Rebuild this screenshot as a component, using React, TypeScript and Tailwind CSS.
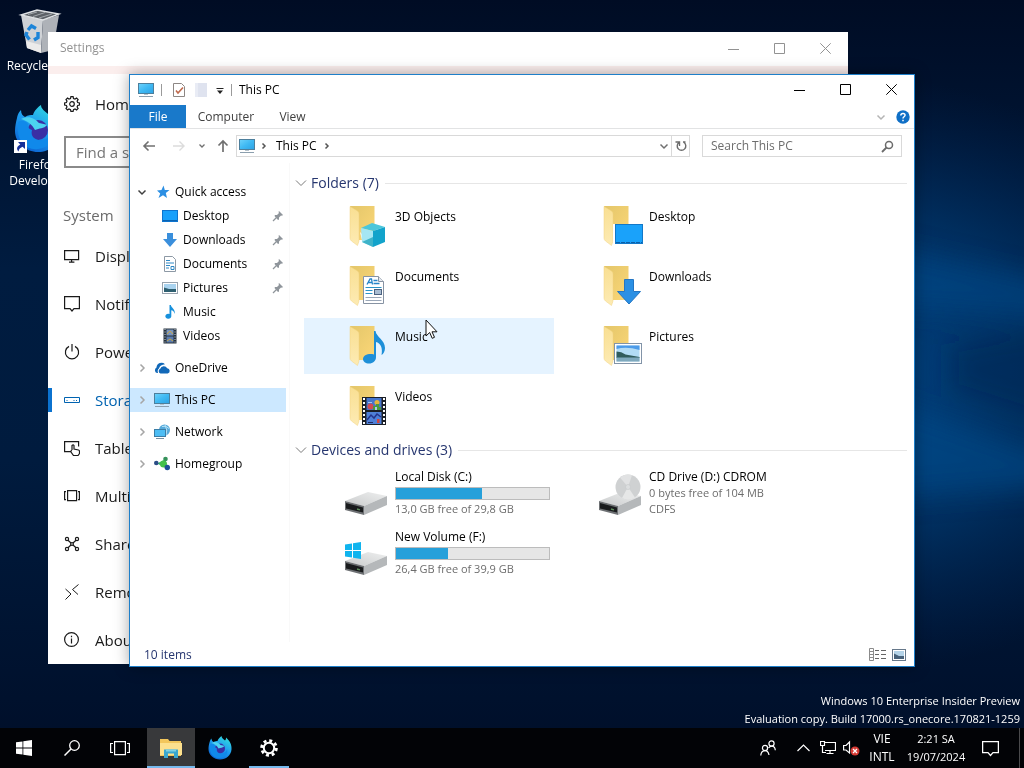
import React from "react";

type IconProps = { className?: string };

/* ---------- Wallpaper ---------- */

function Wallpaper() {
  return (
    <svg className="absolute inset-0 h-full w-full" viewBox="0 0 1024 768" preserveAspectRatio="none" aria-hidden="true">
      <defs>
        <linearGradient id="wpBase" x1="0" y1="0" x2="0" y2="1">
          <stop offset="0" stopColor="#000c24" />
          <stop offset="0.35" stopColor="#001c40" />
          <stop offset="0.6" stopColor="#001b3e" />
          <stop offset="1" stopColor="#000e28" />
        </linearGradient>
        <radialGradient id="wpGlow">
          <stop offset="0" stopColor="#004d92" />
          <stop offset="0.55" stopColor="#003a72" stopOpacity="0.75" />
          <stop offset="1" stopColor="#00285a" stopOpacity="0" />
        </radialGradient>
        <filter id="wpBlur" x="-20%" y="-50%" width="140%" height="200%">
          <feGaussianBlur stdDeviation="13" />
        </filter>
      </defs>
      <rect width="1024" height="768" fill="url(#wpBase)" />
      <ellipse cx="850" cy="375" rx="370" ry="300" fill="url(#wpGlow)" opacity="0.85" />
      <g filter="url(#wpBlur)">
        <polygon points="860,240 1060,285 1060,318 860,305" fill="#004f92" opacity="0.45" />
        <polygon points="860,390 1060,460 1060,485 860,500" fill="#004f92" opacity="0.5" />
        <polygon points="950,345 1060,325 1060,425 950,390" fill="#002650" opacity="0.45" />
      </g>
    </svg>
  );
}

/* ---------- Desktop icons ---------- */

function RecycleBin() {
  return (
    <svg width="48" height="48" viewBox="0 0 48 48" aria-hidden="true">
      <polygon points="7,9 29,14 27,47 13,42" fill="#cfd2d6" />
      <polygon points="29,14 45,9 39,44 27,47" fill="#aeb2b8" />
      <polygon points="7,9 23,4 45,8 29,14" fill="#5b6066" stroke="#dfe2e5" strokeWidth="1.4" />
      <path d="M14 8.500 23 6M19 10.500 31 6.500M25 12 38 8" stroke="#a4a9ae" />
      <polygon points="12,35 27,39 27,47 13,42" fill="#ecebea" />
      <g fill="none" stroke="#1c84d8" strokeWidth="3.4">
        <path d="M14 24 17.500 20 22 22.500" />
        <path d="M24 26 24 31.500 20 34" />
        <path d="M15.500 33.500 12 29 13 26" />
      </g>
    </svg>
  );
}

function FirefoxDev({ className }: IconProps) {
  return (
    <svg className={className} viewBox="0 0 48 48" aria-hidden="true">
      <defs>
        <linearGradient id="fxBody" x1="0.8" y1="0" x2="0.2" y2="1">
          <stop offset="0" stopColor="#35e0dc" />
          <stop offset="0.45" stopColor="#1f9ff0" />
          <stop offset="1" stopColor="#0a5ed0" />
        </linearGradient>
      </defs>
      <path d="M3 13C4 8 6 6 7 5c0 4 2 6 4 7 3-2 6-2 8-2 1-4 5-8 8-10 0 4 4 6 7 9 2-2 2-4 2-6 7 6 12 14 11 24-1 12-11 20-23 20S1 38 1 26c0-5 1-9 2-13Z" fill="url(#fxBody)" />
      <circle cx="24" cy="25" r="10" fill="#3a2fa5" />
      <path d="M4 17c3-2 7-2 10 2-1 3 1 5 4 6-2 7 4 11 11 10 5-1 8-4 9-9 3 9-3 17-14 18C13 46 4 36 4 26Z" fill="#1089ea" />
      <path d="M7 14c7-4 14-1 18 4 3 1 7 1 8 2-3 4-8 3-12 5-3-6-8-9-14-11Z" fill="#4cd3f0" />
    </svg>
  );
}

function DesktopIcons() {
  return (
    <div className="absolute left-0 top-1.5 flex w-[76px] flex-col items-center gap-[31px] text-center text-xs leading-4 text-white">
      <button type="button" className="flex flex-col items-center gap-1">
        <RecycleBin />
        <span className="whitespace-nowrap">Recycle Bin</span>
      </button>
      <button type="button" className="flex flex-col items-center gap-1">
        <span className="relative block">
          <FirefoxDev className="h-12 w-12" />
          <svg className="absolute bottom-0 left-0" width="13" height="13" viewBox="0 0 13 13" aria-hidden="true">
            <rect width="13" height="13" fill="#fff" />
            <path d="M4 2h7v7L8.500 6.800C6 8 5 9 4.500 11.500 2 9 3 6 6.300 4.500Z" fill="#16309a" />
          </svg>
        </span>
        <span>Firefox Developer</span>
      </button>
    </div>
  );
}

/* ---------- Settings window ---------- */

const line = { fill: "none", stroke: "currentColor", strokeWidth: 1.2 } as const;

function Svg16({ children, className }: { children: React.ReactNode; className?: string }) {
  return (
    <svg width="16" height="16" viewBox="0 0 16 16" className={className ?? "shrink-0"} aria-hidden="true">
      {children}
    </svg>
  );
}

const gearPath =
  "M6.900.6h2.200l.4 1.900 1.500.6L12.600 2l1.500 1.500-1 1.600.6 1.400 1.800.4v2.200l-1.800.4-.6 1.500 1 1.500-1.500 1.500-1.600-1-1.500.6-.4 1.800H6.900l-.4-1.800-1.500-.6-1.500 1L2 12.500l1-1.500-.6-1.500L.6 9.100V6.900l1.800-.4L3 5.100 2 3.500 3.500 2 5 3.100l1.500-.6Z";

const settingsIcons: Record<string, React.ReactNode> = {
  display: (
    <g {...line}>
      <path d="M.6 2.600h14v9H.600ZM7.600 11.600v2.400M5 14.200h5.400" />
    </g>
  ),
  notify: (
    <g {...line}>
      <path d="M.6.600h14.800v12H10L8 15l-2-2.400H.600Z" />
    </g>
  ),
  power: (
    <g {...line}>
      <path d="M5 2.400a6.600 6.600 0 1 0 6 0M8 0v7.500" />
    </g>
  ),
  storage: (
    <g fill="none" stroke="currentColor">
      <path d="M.5 5.500h15v5H.5Z" />
      <path d="M2.500 8.500h1M9.500 8.500h1M12 8.500h1" />
    </g>
  ),
  tablet: (
    <g {...line}>
      <path d="M6.500 11.600H.6v-10h14v5M8 10V5.500q1.200-1.200 2 0V9l4.500 1q1 .3 1 1.500v2l-1.500 2H9.500L7 12q-.3-1.500 1-2" />
    </g>
  ),
  multi: (
    <g {...line}>
      <path d="M3.600 2.600h9v10h-9ZM2 3.600H.6v8H2M14 3.600h1.400v8H14" />
    </g>
  ),
  shared: (
    <g {...line}>
      <circle cx="3" cy="3" r="1.600" />
      <circle cx="13" cy="3" r="1.600" />
      <circle cx="3" cy="13" r="1.600" />
      <circle cx="13" cy="13" r="1.600" />
      <circle cx="8" cy="8" r="1.400" />
      <path d="M4 4.200 7 7M12 4.200 9 7M4 11.800 7 9M12 11.800 9 9" />
    </g>
  ),
  remote: (
    <g fill="none" stroke="currentColor">
      <path d="M1.500 5 7 10 1.500 15.500M14.500.5 8.500 5.500l5.500 5" />
    </g>
  ),
  about: (
    <g {...line}>
      <circle cx="7.500" cy="7.500" r="6.900" />
      <path d="M7.500 6.500v5M7.500 3.800v1.400" />
    </g>
  ),
};

const settingsItems = [
  { icon: "display", label: "Display" },
  { icon: "notify", label: "Notifications" },
  { icon: "power", label: "Power & sleep" },
  { icon: "storage", label: "Storage", active: true },
  { icon: "tablet", label: "Tablet mode" },
  { icon: "multi", label: "Multitasking" },
  { icon: "shared", label: "Shared" },
  { icon: "remote", label: "Remote" },
  { icon: "about", label: "About" },
];

function CaptionButtons() {
  return (
    <div className="flex h-full pb-0.5">
      <button type="button" aria-label="Minimize" className="flex w-[46px] items-center justify-center">
        <svg width="11" height="11" viewBox="0 0 11 11"><path d="M0 6.500h11" stroke="currentColor" /></svg>
      </button>
      <button type="button" aria-label="Maximize" className="flex w-[46px] items-center justify-center">
        <svg width="11" height="11" viewBox="0 0 11 11"><path d="M.5.500h10v10H.500Z" fill="none" stroke="currentColor" /></svg>
      </button>
      <button type="button" aria-label="Close" className="flex w-[46px] items-center justify-center">
        <svg width="11" height="11" viewBox="0 0 11 11"><path d="M.3.300l10.400 10.400M10.700.3.300 10.700" stroke="currentColor" /></svg>
      </button>
    </div>
  );
}

function SettingsWindow() {
  return (
    <section className="absolute bottom-16 left-12 right-44 top-8 flex flex-col overflow-hidden bg-white text-[15px] leading-5 text-[#1a1a1a]">
      <header className="flex h-[34px] shrink-0 items-center justify-between pl-3 text-xs text-[#929292]">
        <span className="pb-0.5">Settings</span>
        <CaptionButtons />
      </header>
      <div className="h-2 shrink-0 bg-[#fbeeed]" />
      <nav className="flex w-80 flex-col pt-1.5">
        <a href="#home" className="flex h-12 items-center gap-[15px] pl-4">
          <Svg16>
            <path d={gearPath} {...line} />
            <circle cx="8" cy="8" r="2.300" {...line} />
          </Svg16>
          Home
        </a>
        <label className="mx-4 mt-2 flex h-8 items-center border-2 border-[#8a8a8a] px-2.5">
          <input type="text" aria-label="Find a setting" placeholder="Find a setting" className="w-full bg-transparent outline-none placeholder:text-[#767676]" />
        </label>
        <h2 className="mt-[37px] h-5 pl-[15px] text-[#6b6b6b]">System</h2>
        <ul className="mt-[7px]">
          {settingsItems.map((it) => (
            <li key={it.label}>
              <a href={`#${it.icon}`} className={it.active ? "flex h-12 items-center text-[#0063b1]" : "flex h-12 items-center"}>
                <span className={it.active ? "h-6 w-1 bg-[#0b72cf]" : "h-6 w-1"} />
                <span className="ml-3 mr-[15px]">
                  <Svg16>{settingsIcons[it.icon]}</Svg16>
                </span>
                {it.label}
              </a>
            </li>
          ))}
        </ul>
      </nav>
    </section>
  );
}

/* ---------- Explorer small icons ---------- */

function PcIcon() {
  return (
    <svg width="18" height="16" viewBox="0 0 18 16" aria-hidden="true" className="shrink-0">
      <defs>
        <linearGradient id="pcScreen" x1="0" y1="0" x2="1" y2="1">
          <stop offset="0" stopColor="#6fd3fb" />
          <stop offset="0.5" stopColor="#3fb9f3" />
          <stop offset="1" stopColor="#2da2e4" />
        </linearGradient>
      </defs>
      <rect x="1.500" y="1.500" width="15" height="10" fill="url(#pcScreen)" stroke="#4d7f9c" />
      <path d="M2 14.500h14" stroke="#8c9fae" />
      <path d="M7 12.500h4" stroke="#b6c3cc" />
    </svg>
  );
}

function Chevron({ dir, className, small }: { dir: "right" | "down"; className?: string; small?: boolean }) {
  const d = small
    ? "M3.500 2.500 6 5 3.500 7.500"
    : dir === "right"
      ? "M3.500 1.500 7 5 3.500 8.500"
      : "M1.500 3.500 5 7 8.500 3.500";
  return (
    <svg width="10" height="10" viewBox="0 0 10 10" className={className} aria-hidden="true">
      <path d={d} fill="none" stroke="currentColor" strokeWidth="1.500" />
    </svg>
  );
}

function Pin() {
  return (
    <svg width="12" height="12" viewBox="0 0 12 12" aria-hidden="true">
      <path d="M7 1 11 5 10 5.800 9 5.500 7 7.500 7 9.500 6 10 2.500 6 3 5 5 5 7 3 6.500 2Z" fill="#8f959b" />
      <path d="M4.500 7.500 1 11" stroke="#8f959b" strokeWidth="1.200" />
    </svg>
  );
}

const navIcons: Record<string, React.ReactNode> = {
  star: <path d="M9.500 1.500 10.800 6h4.700l-3.700 3 1.200 5L9 11.200 4.500 14l1.700-4.500L3 6.500l4.500-.5Z" fill="#2c8fe3" />,
  desktop: (
    <>
      <rect x=".5" y="2.500" width="15" height="11" fill="#18a0fb" stroke="#0d74cf" />
      <path d="M1 12.500h14" stroke="#0b62b0" />
    </>
  ),
  downloads: <path d="M5 1h6v6h4L8 15 1 7h4Z" fill="#3a8fdc" />,
  documents: (
    <>
      <path d="M2.500.500h8l3 3v12h-11Z" fill="#fff" stroke="#8d99a5" />
      <path d="M4 4.500h4M4 7h8M4 9.500h4M4 12h3M9 10.500h3v3H9Z" stroke="#2f88c5" fill="none" />
    </>
  ),
  pictures: (
    <>
      <rect x=".5" y="2.500" width="15" height="11" fill="#fff" stroke="#98a3ae" />
      <rect x="2" y="4" width="12" height="8" fill="#a9d3ef" />
      <path d="M2 7.500 7 9h7v3H2Z" fill="#2e5f70" />
    </>
  ),
  music: <path d="M7.500 1h1.300c.5 3 4.700 4 4 9-.6-2.300-2-3.500-3.500-3.700V12A3 2.500 0 1 1 7.500 10Z" fill="#1690dc" />,
  videos: (
    <>
      <rect x="1.500" y=".5" width="13" height="15" fill="#26323e" />
      <rect x="4.500" y="1.500" width="7" height="6" fill="#7b95bd" />
      <rect x="4.500" y="8.500" width="7" height="6" fill="#5c7cae" />
      <path d="M5 6 8 3l3 3M5 13l3-2 3 2" stroke="#c8a748" fill="none" />
      <path d="M3 1v14M13 1v14" stroke="#d0d6dc" strokeDasharray="1 1.500" />
    </>
  ),
  onedrive: (
    <>
      <path d="M3 13A3 3 0 0 1 2.500 7.500 5 5 0 0 1 11 4.200Q6 4.500 5 8.500 3 10 4 13Z" fill="#1168b8" />
      <path d="M6.500 13.500a2.500 2.500 0 0 1-.3-4.700 3.900 3.900 0 0 1 7-.6 2.700 2.700 0 0 1 .5 5.300Z" fill="#1168b8" />
    </>
  ),
  network: (
    <>
      <circle cx="10.500" cy="6" r="5.500" fill="#56aadb" />
      <path d="M8 2.500q4-1.500 7 2M11 1q3 5 1 10" stroke="#b7e3f7" fill="none" />
      <rect x=".5" y="5.500" width="11" height="7" fill="#4dbdf4" stroke="#3b7da6" />
      <path d="M2 14.500h8" stroke="#7890a2" />
    </>
  ),
  homegroup: (
    <>
      <path d="M3 7.500 12 3v9Z" fill="#36b36a" />
      <circle cx="2.300" cy="7" r="2.300" fill="#2b4d86" />
      <circle cx="11.500" cy="3" r="2.300" fill="#35915a" />
      <circle cx="9.500" cy="8" r="3.500" fill="#43c04a" />
      <circle cx="13.300" cy="11.500" r="2.700" fill="#1d4f96" />
    </>
  ),
};

function NavRow({ icon, label, pinned, root, open, selected }: { icon: string; label: string; pinned?: boolean; root?: boolean; open?: boolean; selected?: boolean }) {
  const pad = root ? "pl-[7px] gap-[7px]" : "pl-8 gap-1.5";
  return (
    <a href={`#${icon}`} className={`flex h-6 items-center ${pad} ${selected ? "bg-[#cce8ff]" : ""}`}>
      {root && <Chevron dir={open ? "down" : "right"} className={open ? "text-[#404040]" : "text-[#a6a6a6]"} />}
      <span className="flex items-center gap-[5px]">
        {icon === "pc" ? (
          <span className="-ml-px -mr-px flex"><PcIcon /></span>
        ) : (
          <Svg16>{navIcons[icon]}</Svg16>
        )}
        {label}
      </span>
      {pinned && <span className="ml-auto mr-0.5"><Pin /></span>}
    </a>
  );
}

function NavPane() {
  return (
    <nav className="flex w-40 shrink-0 flex-col gap-2 border-r border-[#f9f9f9] pr-[3px] pt-[17px]">
      <div>
        <NavRow root open icon="star" label="Quick access" />
        <NavRow icon="desktop" label="Desktop" pinned />
        <NavRow icon="downloads" label="Downloads" pinned />
        <NavRow icon="documents" label="Documents" pinned />
        <NavRow icon="pictures" label="Pictures" pinned />
        <NavRow icon="music" label="Music" />
        <NavRow icon="videos" label="Videos" />
      </div>
      <NavRow root icon="onedrive" label="OneDrive" />
      <NavRow root selected icon="pc" label="This PC" />
      <NavRow root icon="network" label="Network" />
      <NavRow root icon="homegroup" label="Homegroup" />
    </nav>
  );
}

/* ---------- Large tile icons ---------- */

function Folder({ children }: { children: React.ReactNode }) {
  return (
    <svg width="48" height="48" viewBox="0 0 48 48" className="shrink-0" aria-hidden="true">
      <defs>
        <linearGradient id="folderBack" x1="0" y1="0" x2="1" y2="1">
          <stop offset="0" stopColor="#e3c66a" />
          <stop offset="1" stopColor="#fcd777" />
        </linearGradient>
        <linearGradient id="folderFront" x1="0" y1="0" x2="0" y2="1">
          <stop offset="0" stopColor="#f9df92" />
          <stop offset="1" stopColor="#fdebb4" />
        </linearGradient>
      </defs>
      <path d="M6 4h24.500v34H12Z" fill="url(#folderBack)" />
      <path d="M6 4.500 13.500 9q1.500 1 1.500 3v27l-1.500 4.500L7.500 39Q6 38 6 36Z" fill="url(#folderFront)" stroke="#f1d283" strokeWidth="0.5" />
      {children}
    </svg>
  );
}

const overlays: Record<string, React.ReactNode> = {
  objects: (
    <>
      <path d="M16 30 24 38 30 45 19 42Z" fill="#fff" />
      <polygon points="17,26 28,21 41,25 29,29" fill="#4bc6da" />
      <polygon points="17,26 29,29 29,45 18,40" fill="#a5e6f3" />
      <polygon points="29,29 41,25 41,40 29,45" fill="#12a3cb" />
      <polygon points="18,40 29,35 29,45" fill="#3eb3c9" />
    </>
  ),
  desktop: (
    <>
      <path d="M15 22v19h3V22Z" fill="#fff" />
      <rect x="17.500" y="22.500" width="27" height="19" fill="#1aa2fa" stroke="#1378c8" />
      <path d="M18 40.500h26" stroke="#0c5fa8" strokeDasharray="4 1" />
    </>
  ),
  documents: (
    <>
      <path d="M19.500 14.500h15l5 5v22h-20Z" fill="#fff" stroke="#8793a3" />
      <path d="M34.500 14.500v5h5" fill="#e5e9ee" stroke="#8793a3" />
      <path d="M23 22.500 26 17h1.500l1 5.500M24 20.500h4M29.500 18.500h4M29.500 21.500h6" stroke="#2684c8" fill="none" strokeWidth="1.300" />
      <path d="M21.500 25.500h16M21.500 28.500h7M21.500 31.500h7" stroke="#2b94c9" />
      <path d="M21.500 35.500h16M21.500 38.500h16" stroke="#9aa7b8" />
      <rect x="30.500" y="27.500" width="7" height="5" fill="#a9bdd2" stroke="#4c6280" />
    </>
  ),
  downloads: (
    <path d="M26.500 17.500h9v12h7L31 42 19.500 29.500h7Z" fill="#2b90e4" stroke="#2476c4" />
  ),
  music: (
    <path d="M30 9h1.500c.8 6 9.500 9 9.500 17 0 3-1.500 6-3.500 7 1.500-7-1-12-5.500-13v15c0 4-3 6.500-7 6.500-3.500 0-6-1.800-6-4.500 0-4 6-6 11-4.500Z" fill="#1e8fd8" />
  ),
  pictures: (
    <>
      <rect x="16.500" y="21.500" width="27" height="20" fill="#fff" stroke="#8294a8" />
      <rect x="18.500" y="23.500" width="23" height="16" fill="#b3dcf5" />
      <path d="M18.500 27q10-3 23 1v-4.500h-23Z" fill="#4c9be9" />
      <path d="M18.500 29.500q5 0 9 3l14 2.500v1h-23Z" fill="#315c5c" />
      <path d="M18.500 35.500h23v4h-23Z" fill="#7fa9bd" />
    </>
  ),
  videos: (
    <>
      <rect x="18" y="15" width="24" height="28" fill="#1b1f26" />
      <path d="M20 16v26M40 16v26" stroke="#fff" strokeWidth="2" strokeDasharray="2 2" />
      <rect x="22.500" y="16" width="15" height="12" fill="#4675cc" />
      <rect x="22.500" y="30" width="15" height="12" fill="#4f80d8" />
      <circle cx="26.500" cy="24.500" r="3" fill="#cf4a55" />
      <circle cx="33" cy="20.500" r="2.500" fill="#e6b43a" />
      <path d="M29 24h3v-2h3v3h2v3h-8Z" fill="#4b9a3c" />
      <path d="M24 20h4v1h-4ZM31 25h2v3h-2Z" fill="#a6c6ef" />
      <path d="M23 38 27 33l3 3 3-4 4 3" stroke="#24348c" strokeWidth="1.500" fill="none" />
      <path d="M33 37h2.500v4H33Z" fill="#d0453f" />
      <path d="M24 40h5v1h-5Z" fill="#1f2c66" />
    </>
  ),
};

function DriveIcon({ kind }: { kind: "disk" | "cd" | "windows" }) {
  return (
    <svg width="48" height="48" viewBox="0 0 48 48" className="shrink-0" aria-hidden="true">
      <defs>
        <linearGradient id="driveTop" x1="0" y1="1" x2="1" y2="0">
          <stop offset="0" stopColor="#c9cbcc" />
          <stop offset="1" stopColor="#eeefef" />
        </linearGradient>
      </defs>
      <polygon points="1,32 24,23 43,27 20,37" fill="url(#driveTop)" />
      <polygon points="20,37 43,27 43,36 20,46" fill="#b5b8ba" />
      <polygon points="1,32 20,37 20,46 1,41" fill="#6d7073" />
      <polygon points="2,34 19,38.500 19,43.500 2,39.500" fill="#191b1d" />
      <path d="M13 40 16 40.800" stroke="#5f8f5e" strokeWidth="1.300" />
      {kind === "cd" && (
        <>
          <circle cx="30" cy="18" r="12.500" fill="#cfd1d2" />
          <path d="M30 18 22 8.500A12.500 12.500 0 0 1 34 6.200Z" fill="#e1e2e3" />
          <path d="M30 18 37 28.400A12.500 12.500 0 0 1 24 29Z" fill="#e6e7e7" />
          <circle cx="30" cy="18" r="2.500" fill="#dcdedf" stroke="#c4c7c9" strokeWidth="0.600" />
        </>
      )}
      {kind === "windows" && (
        <g fill="#10b4ee">
          <polygon points="1,15.500 8,14.500 8,21 1,21" />
          <polygon points="9,14.300 17,13 17,21 9,21" />
          <polygon points="1,22 8,22 8,28.500 1,27.500" />
          <polygon points="9,22 17,22 17,30 9,28.700" />
        </g>
      )}
    </svg>
  );
}

function Tile({ icon, children, hovered }: { icon: React.ReactNode; children: React.ReactNode; hovered?: boolean }) {
  return (
    <button type="button" className={`flex h-14 w-[250px] items-center gap-[3px] pl-10 text-left leading-4 ${hovered ? "bg-[#e5f3ff]" : ""}`}>
      {icon}
      <span className="block min-w-0">{children}</span>
    </button>
  );
}

function GroupHeader({ title }: { title: string }) {
  return (
    <div className="flex h-[30px] items-center gap-1 pl-[5px] pr-[7px]">
      <svg width="12" height="12" viewBox="0 0 12 12" aria-hidden="true">
        <path d="M1 3.500 6 8.500 11 3.500" fill="none" stroke="#7a7a7a" />
      </svg>
      <h2 className="mr-0.5 text-sm leading-5 text-[#26366f]">{title}</h2>
      <span className="h-px flex-1 bg-[#e6e6e6]" />
    </div>
  );
}

function FolderTile({ kind, label, hovered }: { kind: string; label: string; hovered?: boolean }) {
  return (
    <Tile icon={<Folder>{overlays[kind]}</Folder>} hovered={hovered}>
      <span className="block h-[34px]">{label}</span>
    </Tile>
  );
}

function VolumeTile({ kind, label, percent, detail }: { kind: "disk" | "windows"; label: string; percent: number; detail: string }) {
  return (
    <Tile icon={<DriveIcon kind={kind} />}>
      <span className="block h-4">{label}</span>
      <span className="flex h-4 items-center">
        <span className="flex h-[13px] w-[155px] border border-[#bcbcbc] bg-[#e6e6e6]">
          <span className="bg-[#26a0da]" style={{ width: `${percent}%` }} />
        </span>
      </span>
      <span className="block h-4 text-[11px] text-[#6d6d6d]">{detail}</span>
    </Tile>
  );
}

function ExplorerWindow() {
  return (
    <section className="absolute bottom-[61px] left-[129px] right-[109px] top-[74px] flex flex-col border border-[#1e7fc9] bg-white text-xs leading-4 text-black shadow-[0_0_14px_rgba(0,0,0,0.35)]">
      <header className="flex h-[30px] shrink-0 items-center justify-between">
        <div className="flex items-center pl-[7px]">
          <PcIcon />
          <span className="ml-1.5 h-3 w-px bg-[#9a9a9a]" />
          <button type="button" aria-label="Properties" className="ml-2.5">
            <svg width="14" height="16" viewBox="0 0 14 16">
              <path d="M1.500 1.500h8l3 3v10h-11Z" fill="#fff" stroke="#8d8784" />
              <path d="M4 8.500 6 11l5-5.500" fill="none" stroke="#bf6a4c" strokeWidth="1.600" />
            </svg>
          </button>
          <button type="button" aria-label="New folder" className="ml-2">
            <svg width="14" height="16" viewBox="0 0 14 16">
              <path d="M1 1h12v14H1Z" fill="#dfe3ef" />
              <path d="M1 1h3v14H1Z" fill="#e9ecf5" />
            </svg>
          </button>
          <button type="button" aria-label="Customize Quick Access Toolbar" className="ml-[7px]">
            <svg width="10" height="10" viewBox="0 0 10 10"><path d="M1.500 3.500h7" stroke="#222" /><path d="M2 5.500h6L5 9Z" fill="#222" /></svg>
          </button>
          <span className="ml-1.5 h-3 w-px bg-[#9a9a9a]" />
          <span className="ml-[7px]">This PC</span>
        </div>
        <CaptionButtons />
      </header>

      <div className="flex h-6 shrink-0 items-stretch border-b border-[#e2e3e4] text-[#404040]">
        <button type="button" className="w-14 bg-[#1979ca] text-white">File</button>
        <button type="button" className="w-20">Computer</button>
        <button type="button" className="w-[53px]">View</button>
        <div className="ml-auto flex items-center gap-2.5 pr-1">
          <button type="button" aria-label="Expand ribbon"><Chevron dir="down" className="text-[#b4b4b4]" /></button>
          <button type="button" aria-label="Help">
            <svg width="14" height="14" viewBox="0 0 14 14">
              <circle cx="7" cy="7" r="6.700" fill="#0f6fc6" />
              <path d="M4.800 5.500C5 2.500 9.500 3 9 5.500 8.800 6.800 7 6.800 7 8.500M7 9.800v1.500" fill="none" stroke="#fff" strokeWidth="1.500" />
            </svg>
          </button>
        </div>
      </div>

      <div className="flex h-[34px] shrink-0 items-center pr-3">
        <div className="flex w-[106px] items-center pl-3 text-[#707070]">
          <button type="button" aria-label="Back">
            <svg width="14" height="12" viewBox="0 0 14 12"><path d="M13 6H2M6.500 1.500 2 6l4.500 4.500" fill="none" stroke="currentColor" strokeWidth="1.600" /></svg>
          </button>
          <button type="button" aria-label="Forward" className="ml-4 text-[#dcdcdc]">
            <svg width="14" height="12" viewBox="0 0 14 12"><path d="M1 6h11M7.500 1.500 12 6l-4.500 4.500" fill="none" stroke="currentColor" strokeWidth="1.400" /></svg>
          </button>
          <button type="button" aria-label="Recent locations" className="ml-3">
            <svg width="8" height="8" viewBox="0 0 8 8"><path d="M1.500 2.500 4 5 6.500 2.500" fill="none" stroke="currentColor" strokeWidth="1.300" /></svg>
          </button>
          <button type="button" aria-label="Up" className="ml-2.5">
            <svg width="14" height="14" viewBox="0 0 14 14"><path d="M7 13V2M2.500 6.500 7 2l4.500 4.500" fill="none" stroke="currentColor" strokeWidth="1.700" /></svg>
          </button>
        </div>
        <div className="flex h-[22px] flex-1 items-center border border-[#d9d9d9]">
          <span className="pl-px"><PcIcon /></span>
          <Chevron dir="right" small className="ml-[3px] text-[#555]" />
          <span className="ml-[7px]">This PC</span>
          <Chevron dir="right" small className="ml-[5px] text-[#555]" />
          <button type="button" aria-label="Previous locations" className="ml-auto mr-0.5 text-[#707070]"><Chevron dir="down" /></button>
          <button type="button" aria-label="Refresh" className="flex h-full w-[18px] items-center justify-center border-l border-[#d9d9d9]">
            <svg width="12" height="12" viewBox="0 0 12 12"><path d="M8.500 2.500A4.300 4.300 0 1 1 3.500 2.500M4 6V2H0M7.500 2 10 2" fill="none" stroke="#6b6b6b" strokeWidth="1.400" transform="translate(0.500 0)" /></svg>
          </button>
        </div>
        <label className="ml-3 flex h-[22px] w-[200px] items-center border border-[#d9d9d9] pl-2 pr-[7px]">
          <input type="search" aria-label="Search This PC" placeholder="Search This PC" className="min-w-0 flex-1 bg-transparent outline-none placeholder:text-[#6d6d6d]" />
          <svg width="13" height="13" viewBox="0 0 13 13" aria-hidden="true">
            <circle cx="8" cy="5" r="3.500" fill="none" stroke="#6b6b6b" strokeWidth="1.500" />
            <path d="M5.500 7.500 1 12" stroke="#6b6b6b" strokeWidth="1.800" />
          </svg>
        </label>
      </div>

      <div className="flex min-h-0 flex-1">
        <NavPane />
        <main className="min-w-0 flex-1 pt-[5px]">
          <GroupHeader title="Folders (7)" />
          <div className="flex flex-wrap gap-1 pl-3.5">
            <FolderTile kind="objects" label="3D Objects" />
            <FolderTile kind="desktop" label="Desktop" />
            <FolderTile kind="documents" label="Documents" />
            <FolderTile kind="downloads" label="Downloads" />
            <FolderTile kind="music" label="Music" hovered />
            <FolderTile kind="pictures" label="Pictures" />
            <FolderTile kind="videos" label="Videos" />
          </div>
          <div className="pt-px">
            <GroupHeader title="Devices and drives (3)" />
          </div>
          <div className="flex flex-wrap gap-1 pl-3.5">
            <VolumeTile kind="disk" label="Local Disk (C:)" percent={56} detail="13,0 GB free of 29,8 GB" />
            <Tile icon={<DriveIcon kind="cd" />}>
              <span className="block h-4">CD Drive (D:) CDROM</span>
              <span className="block h-4 text-[11px] text-[#6d6d6d]">0 bytes free of 104 MB</span>
              <span className="block h-4 text-[11px] text-[#6d6d6d]">CDFS</span>
            </Tile>
            <VolumeTile kind="windows" label="New Volume (F:)" percent={34} detail="26,4 GB free of 39,9 GB" />
          </div>
        </main>
      </div>

      <footer className="flex h-6 shrink-0 items-center justify-between pl-3.5 pr-2 pt-px text-[#26366f]">
        <span>10 items</span>
        <div className="flex gap-1.5">
          <button type="button" aria-label="Details view">
            <svg width="17" height="13" viewBox="0 0 17 13">
              <path d="M.5.500h4v12h-4ZM.5 3.500h4M.5 6.500h4M.5 9.500h4" fill="none" stroke="#8b8b8b" />
              <path d="M6 2.500h4M12 2.500h5M6 6.500h4M12 6.500h5M6 10.500h4M12 10.500h5" stroke="#666" />
            </svg>
          </button>
          <button type="button" aria-label="Large icons view">
            <svg width="14" height="12" viewBox="0 0 14 12">
              <rect x=".5" y=".5" width="13" height="11" fill="#fff" stroke="#66788a" />
              <rect x="2" y="2" width="10" height="8" fill="#b4d3e8" />
              <path d="M2 4.500 7 7h5v3H2Z" fill="#47617a" />
            </svg>
          </button>
        </div>
      </footer>
    </section>
  );
}

/* ---------- Taskbar ---------- */

function Taskbar() {
  return (
    <footer className="relative flex h-10 shrink-0 items-stretch justify-between bg-[#020306] text-xs text-white">
      <div className="flex">
        <button type="button" aria-label="Start" className="flex w-12 items-center justify-center">
          <svg width="16" height="16" viewBox="0 0 16 16" fill="#fff">
            <path d="M0 2.300 6.500 1.400v6.200H0ZM7.300 1.300 16 0v7.600H7.300ZM0 8.400h6.500v6.200L0 13.700ZM7.300 8.400H16V16l-8.700-1.300Z" />
          </svg>
        </button>
        <button type="button" aria-label="Search" className="flex w-12 items-center justify-center">
          <svg width="16" height="16" viewBox="0 0 16 16"><circle cx="10.500" cy="5.500" r="4.800" fill="none" stroke="#fff" strokeWidth="1.300" /><path d="M7 9 .5 15.500" stroke="#fff" strokeWidth="1.500" /></svg>
        </button>
        <button type="button" aria-label="Task View" className="flex w-12 items-center justify-center">
          <svg width="20" height="16" viewBox="0 0 20 16" fill="none" stroke="#fff" strokeWidth="1.200"><path d="M4.600 1.600h10.800v13H4.600ZM3 3.500H.6v9H3M17 3.500h2.400v9H17" /></svg>
        </button>
        <button type="button" aria-label="File Explorer" className="ml-[3px] flex w-12 items-center justify-center border-b-2 border-[#76b9ed] bg-[#38393b] pt-0.5">
          <svg width="22" height="20" viewBox="0 0 22 20">
            <path d="M0 1h8l1.500 2H21v15H0Z" fill="#f2c65c" />
            <path d="M0 5h22v12H0Z" fill="#fce08e" />
            <path d="M4 11.500h14V20h-4v-4.500H8V20H4Z" fill="#3aa6cf" />
            <path d="M6 11.500h10v2H6Z" fill="#7fd0e4" />
          </svg>
        </button>
        <button type="button" aria-label="Firefox" className="flex w-[50px] items-center justify-center"><FirefoxDev className="h-6 w-6" /></button>
        <button type="button" aria-label="Settings" className="flex w-12 flex-col items-center">
          <span className="flex flex-1 items-center">
            <svg width="18" height="18" viewBox="0 0 18 18" fill="none" stroke="#fff">
              <circle cx="9" cy="9" r="5.200" strokeWidth="2" />
              <circle cx="9" cy="9" r="7.400" strokeWidth="2.800" strokeDasharray="3 2.812" />
            </svg>
          </span>
          <span className="-mt-0.5 h-0.5 w-10 bg-[#76b9ed]" />
        </button>
      </div>
      <div className="flex items-center">
        <button type="button" aria-label="People">
          <svg width="16" height="16" viewBox="0 0 16 16" fill="none" stroke="#fff" strokeWidth="1.200">
            <circle cx="5" cy="8" r="2.600" />
            <circle cx="11.500" cy="3.500" r="2.600" />
            <path d="M.8 15.500C1 12 3 10.700 5 10.700s3.500 1.500 4 4.300M8.500 8q1.500-2 3.500-1.800 3 .3 3.300 4" />
          </svg>
        </button>
        <button type="button" aria-label="Show hidden icons" className="ml-[21px]">
          <svg width="13" height="8" viewBox="0 0 13 8"><path d="M.5 7 6.500 1l6 6" fill="none" stroke="#fff" strokeWidth="1.200" /></svg>
        </button>
        <button type="button" aria-label="Network" className="ml-2.5">
          <svg width="16" height="14" viewBox="0 0 16 14" fill="none" stroke="#fff"><path d="M5 1.500h10.500v8H5M2.500 5v6.500H6M.5.500h4v4h-4ZM10 9.500v3M6.500 12.500h7" strokeWidth="1.200" /></svg>
        </button>
        <button type="button" aria-label="Volume muted" className="ml-[7px]">
          <svg width="17" height="16" viewBox="0 0 17 16">
            <path d="M.6 5.500H3L6.500 2v11L3 10H.6Z" fill="none" stroke="#fff" strokeWidth="1.200" />
            <circle cx="12" cy="11" r="4.500" fill="#d63a34" />
            <path d="M10 9l4 4M14 9l-4 4" stroke="#fff" strokeWidth="1.300" />
          </svg>
        </button>
        <button type="button" className="w-11 text-center leading-[18px]">VIE<br />INTL</button>
        <button type="button" className="w-16 whitespace-nowrap text-center text-[11px] leading-[18px]">2:21 SA<br />19/07/2024</button>
        <button type="button" aria-label="Notifications" className="ml-[14px]">
          <svg width="17" height="17" viewBox="0 0 17 17"><path d="M.6 1.600h15.800v11H11L8.500 15.500 6 12.600H.6Z" fill="none" stroke="#fff" strokeWidth="1.300" /></svg>
        </button>
        <span className="ml-5 mr-1 h-full w-px bg-[#4a4a4c]" />
      </div>
    </footer>
  );
}

export default function App() {
  return (
    <div className="relative flex h-screen flex-col overflow-hidden font-['Open_Sans','Noto_Sans',sans-serif]">
      <Wallpaper />
      <div className="relative flex-1">
        <DesktopIcons />
        <SettingsWindow />
        <ExplorerWindow />
        <svg className="absolute left-[425px] top-[319px]" width="13" height="21" viewBox="0 0 13 21" aria-hidden="true">
          <path d="M1 1v16l3.700-3.500 2.500 5.800 2.300-1-2.500-5.500H12Z" fill="#fff" stroke="#111" />
        </svg>
        <p className="absolute bottom-0 right-1 whitespace-nowrap text-right text-[11px] leading-[18px] text-white">
          Windows 10 Enterprise Insider Preview<br />Evaluation copy. Build 17000.rs_onecore.170821-1259
        </p>
      </div>
      <Taskbar />
    </div>
  );
}
